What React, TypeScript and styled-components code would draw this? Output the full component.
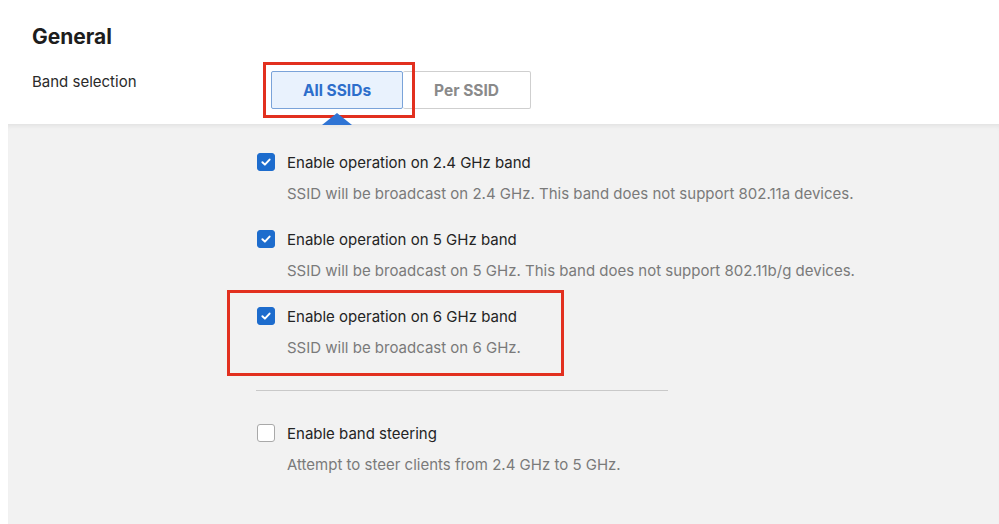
import styled, { createGlobalStyle } from "styled-components";

const GlobalStyle = createGlobalStyle`
  html, body {
    margin: 0;
    padding: 0;
    background: #ffffff;
  }
  body {
    font-family: Inter, "Noto Sans", "Liberation Sans", sans-serif;
    color: #222;
  }
`;

const Page = styled.div`
  width: 999px;
  height: 524px;
  overflow: hidden;
  display: flex;
  flex-direction: column;
`;

const Header = styled.div`
  padding: 25px 32px 0 32px;
  height: 99px;
`;

const Title = styled.h2`
  margin: 0;
  font-size: 21px;
  line-height: 24px;
  font-weight: 700;
  color: #1d1d1d;
`;

const FieldRow = styled.div`
  display: flex;
  align-items: flex-start;
  margin-top: 34px;
`;

const FieldLabel = styled.div`
  width: 239px;
  font-size: 15px;
  line-height: 20px;
  color: #2a2a2a;
  margin-top: -11px;
`;

const Segmented = styled.div`
  display: flex;
  margin-top: -12px;
`;

const SegmentWrap = styled.div`
  position: relative;
`;

const Segment = styled.button<{ $active?: boolean }>`
  position: relative;
  height: 38px;
  padding: 0;
  width: ${({ $active }) => ($active ? "132px" : "128px")};
  font-family: inherit;
  font-size: 15.5px;
  font-weight: 700;
  border-radius: 2px;
  cursor: pointer;
  border: 1px solid ${({ $active }) => ($active ? "#7aa3d9" : "#cfcfcf")};
  background: ${({ $active }) => ($active ? "#e9f2fd" : "#ffffff")};
  color: ${({ $active }) => ($active ? "#2d6ecb" : "#8a8a8a")};
  ${({ $active }) => ($active ? "" : "border-left: none;")}
`;

const Pointer = styled.span`
  position: absolute;
  left: 50%;
  bottom: -17px;
  transform: translateX(-50%);
  width: 0;
  height: 0;
  border-left: 15px solid transparent;
  border-right: 15px solid transparent;
  border-bottom: 12px solid #2f74d4;
  z-index: 2;
`;

const Highlight = styled.span<{ $t: number; $r: number; $b: number; $l: number }>`
  position: absolute;
  top: ${({ $t }) => $t}px;
  right: ${({ $r }) => $r}px;
  bottom: ${({ $b }) => $b}px;
  left: ${({ $l }) => $l}px;
  border: 3px solid #e2301f;
  pointer-events: none;
  z-index: 1;
`;

const Panel = styled.div`
  flex: 1;
  margin-left: 8px;
  background: #f2f2f2;
  box-shadow: inset 0 5px 5px -3px rgba(0, 0, 0, 0.07);
  padding: 28px 0 0 249px;
  display: flex;
  flex-direction: column;
  align-items: flex-start;
`;

const OptionList = styled.div`
  display: flex;
  flex-direction: column;
  align-items: flex-start;
  gap: 25px;
`;

const Option = styled.div`
  position: relative;
`;

const OptionRow = styled.label`
  display: flex;
  align-items: center;
  gap: 12px;
  height: 20px;
  font-size: 15px;
  color: #242424;
  white-space: nowrap;
`;

const Box = styled.span<{ $checked?: boolean }>`
  width: 18px;
  height: 18px;
  box-sizing: border-box;
  border-radius: 3px;
  display: flex;
  align-items: center;
  justify-content: center;
  background: ${({ $checked }) => ($checked ? "#1d6ccd" : "#ffffff")};
  border: 1px solid ${({ $checked }) => ($checked ? "#1d6ccd" : "#a9a9a9")};
`;

const Description = styled.div`
  margin: 12px 0 0 30px;
  font-size: 15px;
  line-height: 20px;
  color: #7a7a7a;
  white-space: nowrap;
`;

const Divider = styled.hr`
  width: 412px;
  margin: 32px 0 32px -1px;
  border: none;
  border-top: 1px solid #c9c9c9;
`;

function Check() {
  return (
    <svg width="12" height="12" viewBox="0 0 12 12">
      <path d="M2.4 6.2 L4.9 8.6 L9.6 3.6" fill="none" stroke="#fff" strokeWidth="2" strokeLinecap="round" strokeLinejoin="round" />
    </svg>
  );
}

interface Item {
  label: string;
  desc: string;
  checked: boolean;
  marked?: boolean;
}

const bands: Item[] = [
  {
    label: "Enable operation on 2.4 GHz band",
    desc: "SSID will be broadcast on 2.4 GHz. This band does not support 802.11a devices.",
    checked: true,
  },
  {
    label: "Enable operation on 5 GHz band",
    desc: "SSID will be broadcast on 5 GHz. This band does not support 802.11b/g devices.",
    checked: true,
  },
  {
    label: "Enable operation on 6 GHz band",
    desc: "SSID will be broadcast on 6 GHz.",
    checked: true,
    marked: true,
  },
];

function OptionItem({ item }: { item: Item }) {
  return (
    <Option>
      {item.marked && <Highlight $t={-16} $r={-43} $b={-18} $l={-30} />}
      <OptionRow>
        <Box $checked={item.checked}>{item.checked && <Check />}</Box>
        {item.label}
      </OptionRow>
      <Description>{item.desc}</Description>
    </Option>
  );
}

export default function App() {
  return (
    <>
      <GlobalStyle />
      <Page>
        <Header>
          <Title>General</Title>
          <FieldRow>
            <FieldLabel>Band selection</FieldLabel>
            <Segmented>
              <SegmentWrap>
                <Highlight $t={-9} $r={-12} $b={-9} $l={-8} />
                <Segment $active>
                  All SSIDs
                  <Pointer />
                </Segment>
              </SegmentWrap>
              <Segment>Per SSID</Segment>
            </Segmented>
          </FieldRow>
        </Header>
        <Panel>
          <OptionList>
            {bands.map((b) => (
              <OptionItem key={b.label} item={b} />
            ))}
          </OptionList>
          <Divider />
          <OptionItem
            item={{
              label: "Enable band steering",
              desc: "Attempt to steer clients from 2.4 GHz to 5 GHz.",
              checked: false,
            }}
          />
        </Panel>
      </Page>
    </>
  );
}
